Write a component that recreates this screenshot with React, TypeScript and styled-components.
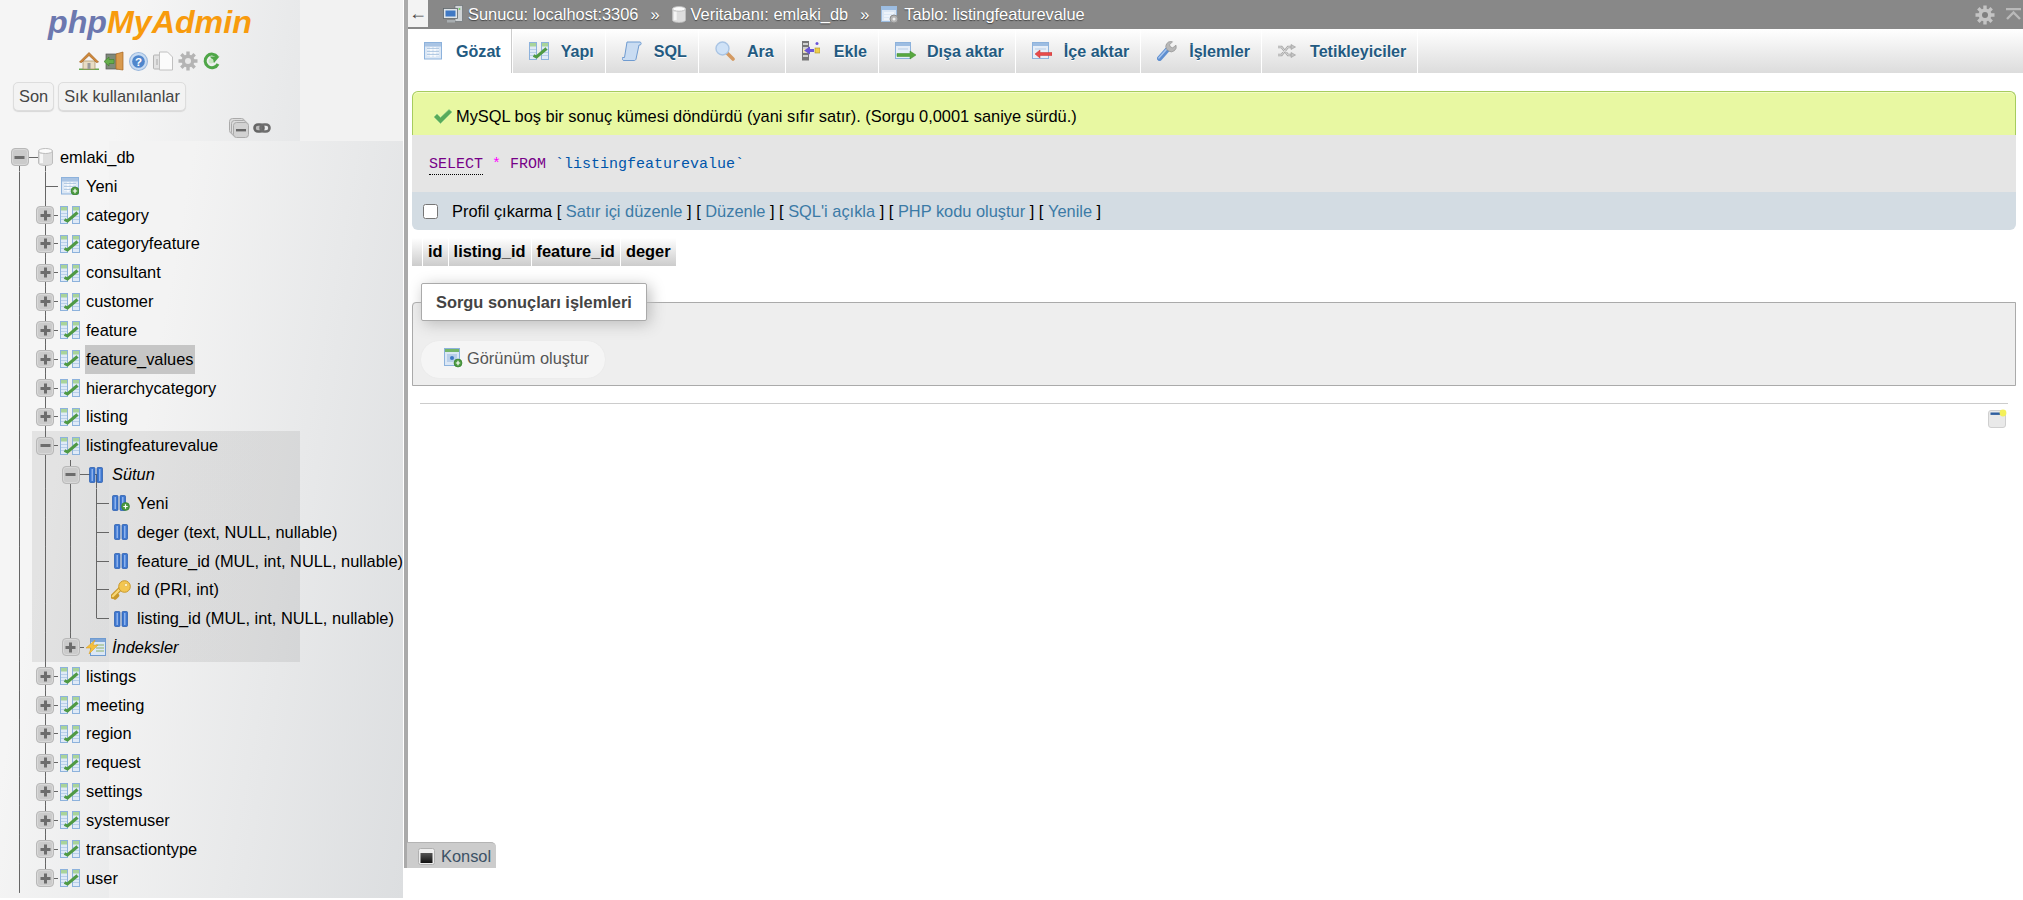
import React from 'react'
import styled, { createGlobalStyle } from 'styled-components'

const Global = createGlobalStyle`
	html, body {
		margin: 0;
		background: #fff;
	}
	body {
		font: 16.4px "Liberation Sans", Arial, sans-serif;
		color: #000;
		overflow: hidden;
	}
`

const Page = styled.div`
	display: flex;
	width: 2023px;
	height: 900px;
	overflow: hidden;
`

/* navigation panel */

const Sidebar = styled.aside`
	flex: none;
	width: 403px;
	height: 898px;
	margin-right: 1px;
	background: linear-gradient(100deg, #f5f5f5 30%, #dcdee0 100%) 0 0 / 300px 100% no-repeat, #f2f2f2;
`

const Handle = styled.div`
	flex: none;
	width: 4px;
	height: 868px;
	background: #aaa;
`

const Logo = styled.div`
	height: 47px;
	padding: 1px 0 0 48px;
	box-sizing: border-box;
	font-size: 32.2px;
	line-height: 42px;
	font-weight: bold;
	font-style: italic;
	color: #f89b0d;
	span {
		color: #6c78af;
	}
`

const QuickIcons = styled.div`
	display: flex;
	align-items: center;
	gap: 5px;
	height: 24px;
	padding: 2px 0 0 79px;
`

const RecentRow = styled.div`
	display: flex;
	gap: 4px;
	padding: 9px 0 0 13px;
`

const RecentButton = styled.div`
	height: 29px;
	padding: 0 5px;
	box-sizing: border-box;
	line-height: 27px;
	color: #444;
	background: #f3f3f3;
	border: 1px solid #ddd;
	border-radius: 5px;
	box-shadow: 0 1px 1px #d8d8d8;
`

const TreeControls = styled.div`
	display: flex;
	align-items: center;
	gap: 4px;
	height: 30px;
	box-sizing: border-box;
	padding: 3px 0 0 229px;
`

const Tree = styled.div`
	padding: 2px 0 0 7px;
	background: linear-gradient(100deg, #f3f3f3 20%, #dcdee0 100%) 109px 0 / 294px 100% no-repeat;
	height: 755px;
`

const OpenGroup = styled.div`
	margin-left: -7px;
	padding-left: 7px;
	background: linear-gradient(rgba(0, 0, 0, 0.075), rgba(0, 0, 0, 0.075)) 32px 0 / 268px 100% no-repeat;
`

const Row = styled.div`
	display: flex;
	align-items: center;
	height: 28.84px;
	white-space: nowrap;
`

type RailKind = 'none' | 'pass' | 'tee' | 'elbow' | 'start' | 'cap'

const LINE = 'linear-gradient(#666, #666)'
const railBackgrounds: Record<RailKind, string> = {
	none: 'none',
	pass: `${LINE} center / 1px 100% no-repeat`,
	tee: `${LINE} center / 1px 100% no-repeat, ${LINE} right center / 50% 1px no-repeat`,
	elbow: `${LINE} top center / 1px 50% no-repeat, ${LINE} right center / 50% 1px no-repeat`,
	start: `${LINE} bottom center / 1px 50% no-repeat, ${LINE} right center / 50% 1px no-repeat`,
	cap: `${LINE} bottom center / 1px 50% no-repeat, ${LINE} left center / 50% 1px no-repeat`,
}

const Rail = styled.span<{ $kind: RailKind }>`
	flex: none;
	display: flex;
	align-items: center;
	justify-content: center;
	width: 25.5px;
	height: 100%;
	background: ${(p) => railBackgrounds[p.$kind]};
`

const ExpanderBox = styled.span`
	display: flex;
	align-items: center;
	justify-content: center;
	width: 18px;
	height: 18px;
	box-sizing: border-box;
	background: #cbcbcb;
	border: 1px solid #b8b8b8;
	border-radius: 4px;
	box-shadow: inset 0 0 0 1px #d8d8d8;
`

const IconBox = styled.span`
	flex: none;
	display: flex;
	align-items: center;
	justify-content: center;
	width: 20px;
	margin: 0 6px 0 2px;
`

const Label = styled.span<{ $italic?: boolean; $hover?: boolean; $gap?: number }>`
	font-style: ${(p) => (p.$italic ? 'italic' : 'normal')};
	margin-left: ${(p) => p.$gap ?? 0}px;
	line-height: 29px;
	${(p) => p.$hover && 'background: #c6c6c6; margin-left: -1px; padding: 0 1px;'}
`

/* icons */

const Svg = styled.svg`
	flex: none;
	display: block;
`

const Expander = ({ open }: { open?: boolean }) => (
	<ExpanderBox>
		<Svg width="11" height="11" viewBox="0 0 11 11">
			<rect x="0.5" y="4" width="10" height="3" fill="#6c6c6c" />
			{!open && <rect x="4" y="0.5" width="3" height="10" fill="#6c6c6c" />}
		</Svg>
	</ExpanderBox>
)

const StructureIcon = ({ size = 20 }: { size?: number }) => (
	<Svg width={size} height={size} viewBox="0 0 20 20">
		<rect x="0.5" y="1.5" width="7" height="17" fill="#dfeaf7" stroke="#8db2dc" />
		<rect x="12.5" y="1.5" width="7" height="17" fill="#dfeaf7" stroke="#8db2dc" />
		<rect x="1" y="2" width="6" height="3.5" fill="#a9d49a" />
		<rect x="13" y="2" width="6" height="3.5" fill="#a9d49a" />
		<path d="M1 8.500h6M1 11.500h6M1 14.500h6M13 8.500h6M13 11.500h6M13 14.500h6" stroke="#b9cfe8" />
		<path d="M4.500 14.500l3 1.500L17.500 7.500" fill="none" stroke="#4f9a44" strokeWidth="3" />
	</Svg>
)

const DbIcon = ({ size = 15, h = 18 }: { size?: number; h?: number }) => (
	<Svg width={size} height={h} viewBox="0 0 15 18">
		<path d="M0.5 3v12c0 1.5 3 2.5 7 2.5s7-1 7-2.5V3z" fill="#dedede" stroke="#bdbdbd" />
		<ellipse cx="7.5" cy="3" rx="7" ry="2.5" fill="#fbfbfb" stroke="#bdbdbd" />
		<rect x="2" y="6" width="3" height="9" fill="#f6f6f6" />
	</Svg>
)

const PlusBadge = ({ x, y }: { x: number; y: number }) => (
	<g>
		<circle cx={x} cy={y} r="4" fill="#4c9a3f" stroke="#2f7a28" strokeWidth="0.6" />
		<path d={`M${x - 2.2} ${y}h4.4M${x} ${y - 2.2}v4.4`} stroke="#fff" strokeWidth="1.2" />
	</g>
)

const GridIcon = ({ size = 18, plus }: { size?: number; plus?: boolean }) => (
	<Svg width={size} height={size} viewBox="0 0 18 18">
		<rect x="0.5" y="0.5" width="17" height="16.5" fill="#dbe7f5" stroke="#8db2dc" />
		<rect x="1" y="1" width="16" height="3.5" fill="#a9c4e4" />
		<path d="M3 7h12M3 10h12M3 13h12M7 5v10M11 5v10" stroke="#fff" strokeWidth="1.2" />
		<path d="M3 6.5h12M3 9.5h12M3 12.5h12" stroke="#9ab7d9" strokeWidth="0.7" />
		{plus && <PlusBadge x={14} y={14} />}
	</Svg>
)

const ColumnIcon = ({ plus }: { plus?: boolean }) => (
	<Svg width={plus ? 18 : 14} height="16" viewBox={plus ? '0 0 18 16' : '0 0 14 16'}>
		<rect x="0.5" y="0.5" width="5.5" height="15" rx="1" fill="#3f78d0" stroke="#2459ad" strokeWidth="0.7" />
		<rect x="8" y="0.5" width="5.5" height="15" rx="1" fill="#3f78d0" stroke="#2459ad" strokeWidth="0.7" />
		<rect x="2.5" y="2" width="1.5" height="12" fill="#8db2ec" />
		<rect x="10" y="2" width="1.5" height="12" fill="#8db2ec" />
		{plus && <PlusBadge x={13.5} y={11.5} />}
	</Svg>
)

const KeyIcon = () => (
	<Svg width="20" height="20" viewBox="0 0 20 20">
		<path d="M1.500 16.500l8-8M4 17.500l2-2" stroke="#c9982a" strokeWidth="4.500" strokeLinecap="round" />
		<path d="M1.800 16.200l8-8" stroke="#f8d876" strokeWidth="2.200" strokeLinecap="round" />
		<circle cx="13.5" cy="6.5" r="5.8" fill="#f3c650" stroke="#c9982a" />
		<circle cx="15" cy="5" r="1.6" fill="#fff4c8" stroke="#d8a83a" strokeWidth="0.5" />
	</Svg>
)

const IndexIcon = () => (
	<Svg width="20" height="18" viewBox="0 0 20 18">
		<rect x="4.5" y="0.5" width="15" height="17" fill="#dbe7f5" stroke="#6f9bd0" />
		<rect x="5" y="1" width="14" height="3" fill="#7fa6d8" />
		<path d="M10 7h8M10 10h8M10 13h8" stroke="#8db26a" />
		<path d="M9 2L0 10h5l-2 6 9-9H7z" fill="#f5c03c" stroke="#d89a1e" strokeWidth="0.5" />
	</Svg>
)

const HomeIcon = () => (
	<Svg width="20" height="20" viewBox="0 0 20 20">
		<path d="M0 19h20v-1.5H0z" fill="#6aa84f" />
		<path d="M4 10v8h12v-8z" fill="#e8dcc4" stroke="#a88f66" strokeWidth="0.7" />
		<rect x="8.5" y="12" width="3" height="6" fill="#9a9a9a" />
		<path d="M0.5 11L10 1.5 19.5 11l-2 0.5L10 4.5 2.5 11.5z" fill="#d08a3a" stroke="#a35f1c" strokeWidth="0.7" />
	</Svg>
)

const ExitIcon = () => (
	<Svg width="20" height="20" viewBox="0 0 20 20">
		<rect x="2" y="3" width="12" height="15" fill="#7f8a7a" stroke="#555" strokeWidth="0.7" />
		<path d="M12 3l7-2v18l-7-1z" fill="#d99a4e" stroke="#a8651f" strokeWidth="0.7" />
		<path d="M0 10.5l5-4.5v2.5h5v4H5V15z" fill="#65ae4a" stroke="#3c7d2c" strokeWidth="0.6" />
	</Svg>
)

const HelpIcon = () => (
	<Svg width="19" height="19" viewBox="0 0 18 18">
		<circle cx="9" cy="9" r="8.5" fill="#c9dcf2" stroke="#9ab8dc" />
		<circle cx="9" cy="9" r="6" fill="#4f86cc" />
		<text x="9" y="13" fontSize="11" fontWeight="bold" fontFamily="Liberation Sans" textAnchor="middle" fill="#fff">?</text>
	</Svg>
)

const DocsIcon = () => (
	<Svg width="20" height="20" viewBox="0 0 20 20">
		<rect x="0.5" y="4" width="9" height="14" rx="1" fill="#e2e2e2" stroke="#b4b4b4" />
		<path d="M6.5 1h8l5 5v13h-13z" fill="#fbfbfb" stroke="#c0c0c0" />
		<path d="M4 8v6" stroke="#aaa" />
	</Svg>
)

const GearIcon = ({ size = 20, color = '#b4b4b4', hole = '#e8e8e8' }: { size?: number; color?: string; hole?: string }) => (
	<Svg width={size} height={size} viewBox="0 0 20 20">
		<g stroke={color} strokeWidth="3.4">
			<path d="M10 0.5v19M0.5 10h19M3.3 3.3l13.4 13.4M16.7 3.3L3.3 16.7" />
		</g>
		<circle cx="10" cy="10" r="6.5" fill={color} />
		<circle cx="10" cy="10" r="3" fill={hole} />
	</Svg>
)

const ReloadIcon = () => (
	<Svg width="17" height="20" viewBox="0 0 17 20">
		<path d="M14.5 6A6.8 6.8 0 1 0 15 13" fill="none" stroke="#4fa648" strokeWidth="3" />
		<path d="M7 5.5h9.5L11 12z" fill="#4fa648" />
		<circle cx="8" cy="10" r="2.5" fill="#c9e6c2" />
	</Svg>
)

const CollapseAllIcon = () => (
	<Svg width="20" height="20" viewBox="0 0 20 20">
		<rect x="0.5" y="0.5" width="15" height="15" rx="3" fill="#ddd" stroke="#aaa" />
		<rect x="2.5" y="2.5" width="15" height="15" rx="3" fill="#ddd" stroke="#aaa" />
		<rect x="4.5" y="4.5" width="15" height="15" rx="3" fill="#d2d2d2" stroke="#aaa" />
		<rect x="7" y="11" width="10" height="2.4" fill="#666" />
	</Svg>
)

const LinkIcon = () => (
	<Svg width="18" height="10" viewBox="0 0 18 10">
		<rect x="1.5" y="1.5" width="9" height="7" rx="3.500" fill="#bbb" stroke="#666" strokeWidth="2.6" />
		<rect x="7.5" y="1.5" width="9" height="7" rx="3.500" fill="none" stroke="#6e6e6e" strokeWidth="2.6" />
	</Svg>
)

const ServerIcon = () => (
	<Svg width="20" height="19" viewBox="0 0 20 19">
		<rect x="12" y="0.5" width="7.5" height="16" fill="#cfd3d6" stroke="#6d7377" strokeWidth="0.7" />
		<rect x="0.5" y="3.5" width="14" height="10" fill="#dfe4e8" stroke="#5f666b" strokeWidth="0.8" />
		<rect x="2.5" y="5.5" width="10" height="6" fill="#3f78c4" />
		<rect x="4" y="15" width="8" height="2.5" fill="#a8adb0" />
		<circle cx="16.5" cy="4" r="0.9" fill="#6fd15b" />
	</Svg>
)

const TableGearIcon = () => (
	<Svg width="18" height="18" viewBox="0 0 18 18">
		<rect x="0.5" y="0.5" width="15" height="15" fill="#dbe7f5" stroke="#9bbce0" />
		<rect x="1" y="1" width="14" height="3" fill="#9dbde2" />
		<path d="M3 7h10M3 10h10M3 13h10" stroke="#fff" />
		<circle cx="13" cy="13" r="4" fill="#b4b4b4" stroke="#8c8c8c" />
		<circle cx="13" cy="13" r="1.5" fill="#eee" />
	</Svg>
)

const ScrollIcon = () => (
	<Svg width="20" height="20" viewBox="0 0 20 20">
		<path d="M5 1h13c1.5 0 1.5 3 0 3h-1l-3 14c-0.3 1.2-1 1.5-2 1.5H2c-1.5 0-2-1-1.5-3h2z" fill="#c9dcf2" stroke="#6f9bd0" />
	</Svg>
)

const SearchIcon = () => (
	<Svg width="20" height="20" viewBox="0 0 20 20">
		<path d="M11 11l7 7" stroke="#d49a62" strokeWidth="3.6" strokeLinecap="round" />
		<circle cx="7.5" cy="7.5" r="6.5" fill="#cfe2f7" stroke="#a9c4e4" strokeWidth="1.4" />
	</Svg>
)

const InsertIcon = () => (
	<Svg width="18" height="20" viewBox="0 0 18 20">
		<rect x="0" y="0" width="7" height="19.5" fill="#777" />
		<path d="M1 3h5M1 7h5M1 11h5M1 15h5" stroke="#eee" strokeWidth="1.5" />
		<rect x="1" y="8" width="5" height="3.5" fill="#f2e8b0" />
		<path d="M2 9.5l6-4v2.5h4v3H8v2.5z" fill="#6a55d8" />
		<rect x="13" y="7" width="5" height="5" fill="#f0cf4a" stroke="#a88f2a" strokeWidth="0.6" />
		<circle cx="15" cy="2.5" r="1.5" fill="#6a55d8" />
	</Svg>
)

const ExportIcon = () => (
	<Svg width="21" height="20" viewBox="0 0 21 20">
		<rect x="0.5" y="1.5" width="15" height="16" fill="#e6eef8" stroke="#8db2dc" />
		<rect x="1" y="2" width="14" height="3" fill="#9dbde2" />
		<path d="M3 8h10" stroke="#b7cde6" />
		<path d="M2 12.5h13v-2.5l6 4-6 4v-2.5H2z" fill="#58a83f" stroke="#3f8a2c" strokeWidth="0.5" />
	</Svg>
)

const ImportIcon = () => (
	<Svg width="20" height="20" viewBox="0 0 20 20">
		<rect x="0.5" y="1.5" width="16" height="16" fill="#e6eef8" stroke="#8db2dc" />
		<rect x="1" y="2" width="15" height="3" fill="#9dbde2" />
		<path d="M3 8h11" stroke="#b7cde6" />
		<path d="M20 11.5H8V9l-5 4 5 4v-2.5h12z" fill="#e84a4a" stroke="#c23232" strokeWidth="0.5" />
	</Svg>
)

const WrenchIcon = () => (
	<Svg width="20" height="20" viewBox="0 0 20 20">
		<path d="M2.5 17.5l8-9" stroke="#5f8fd0" strokeWidth="5" strokeLinecap="round" />
		<path d="M1.8 17l8-9" stroke="#a8c6ee" strokeWidth="1.5" strokeLinecap="round" />
		<path d="M9.5 8a5 5 0 0 1 5-7.5l1 .3-3 3 1 2.2 2.2.8 3.3-2.6A5 5 0 0 1 11.5 10z" fill="#b8b8b8" stroke="#888" strokeWidth="0.6" />
	</Svg>
)

const TriggerIcon = () => (
	<Svg width="18" height="14" viewBox="0 0 18 14">
		<path d="M0 3h3.500l6.500 8h3M0 11h3.500l6.500-8h3" fill="none" stroke="#a8a8a8" strokeWidth="2.400" />
		<path d="M0 3h3.500l6.500 8h3M0 11h3.500l6.500-8h3" fill="none" stroke="#e4e4e4" strokeWidth="0.800" />
		<path d="M13 0.500l4.500 2.500L13 5.500zM13 8.500l4.500 2.500L13 13.500z" fill="#c4c4c4" stroke="#8c8c8c" strokeWidth="0.5" />
	</Svg>
)

const CheckIcon = () => (
	<Svg width="20" height="16" viewBox="0 0 20 16">
		<path d="M1 9l3-3 3.5 3.5L16 1.5l3 2.5L7.5 15.5z" fill="#58ab5a" stroke="#8ccf8c" strokeWidth="0.6" />
	</Svg>
)

const ViewIcon = () => (
	<Svg width="20" height="20" viewBox="0 0 20 20">
		<rect x="1.5" y="0.5" width="15" height="17" fill="#dbe7f5" stroke="#8db2dc" />
		<rect x="2" y="1" width="14" height="3" fill="#74b56a" />
		<rect x="4" y="6" width="10" height="8" fill="#b9cfe9" />
		<circle cx="9" cy="10" r="2" fill="#3f78c4" />
		<PlusBadge x={15} y={15} />
	</Svg>
)

const TerminalIcon = () => (
	<Svg width="17" height="17" viewBox="0 0 17 17">
		<defs>
			<linearGradient id="konsolFill" x1="0" y1="0" x2="0" y2="1">
				<stop offset="0" stopColor="#555" />
				<stop offset="1" stopColor="#111" />
			</linearGradient>
		</defs>
		<rect x="0.5" y="0.5" width="16" height="16" rx="2" fill="#eee" stroke="#b0b0b0" />
		<rect x="2.5" y="5" width="12" height="10" fill="url(#konsolFill)" />
	</Svg>
)

const NotesIcon = () => (
	<Svg width="19" height="19" viewBox="0 0 19 19">
		<rect x="0.5" y="1.5" width="17" height="17" rx="2.5" fill="#e9e9e9" stroke="#cfcfcf" />
		<rect x="2.5" y="3.5" width="12" height="2.4" fill="#2f5f9f" />
		<circle cx="15" cy="4" r="3.4" fill="#f4f05a" />
	</Svg>
)

const CollapseArrowIcon = () => (
	<Svg width="15" height="13" viewBox="0 0 15 13">
		<path d="M0 1h15M1 11l6.500-6.500L14 11" fill="none" stroke="#b9b9b9" strokeWidth="2.4" />
	</Svg>
)

/* main column */

const Main = styled.main`
	flex: none;
	display: flex;
	flex-direction: column;
	width: 1615px;
	height: 868px;
`

const TopBar = styled.header`
	flex: none;
	display: flex;
	align-items: center;
	height: 29px;
	background: #888;
	color: #fff;
	text-shadow: 0 1px 1px #444;
`

const BackButton = styled.div`
	align-self: flex-start;
	width: 20px;
	height: 27px;
	margin-right: 15px;
	background: #f3f3f3;
	color: #444;
	text-align: center;
	font-size: 18px;
	line-height: 27px;
	text-shadow: none;
`

const Crumb = styled.span`
	display: flex;
	align-items: center;
	gap: 5px;
`

const CrumbSep = styled.span`
	margin: 0 12px;
`

const BarActions = styled.div`
	display: flex;
	align-items: center;
	gap: 11px;
	margin-left: auto;
	padding-right: 2px;
`

const TabBar = styled.nav`
	flex: none;
	display: flex;
	height: 44px;
	background: linear-gradient(#fff, #dcdcdc);
`

const Tab = styled.a<{ $active?: boolean }>`
	display: flex;
	align-items: center;
	padding: 0 11px 0 16px;
	border-right: 1px solid #fff;
	background: ${(p) => (p.$active ? '#fff' : 'none')};
	box-shadow: ${(p) => (p.$active ? 'inset -1px 0 0 #ccc' : 'none')};
	font-size: 16.1px;
	font-weight: bold;
	color: #235a81;
	text-shadow: 0 1px 0 #fff;
`

const TabIcon = styled.span`
	flex: none;
	display: flex;
	align-items: center;
	width: 32px;
`

const Content = styled.div`
	flex: 1;
	display: flex;
	flex-direction: column;
	padding: 18px 7px 0 4px;
`

const Message = styled.div`
	display: flex;
	align-items: center;
	gap: 3px;
	height: 44px;
	padding: 5px 0 0 20px;
	box-sizing: border-box;
	background: #e8f8a2;
	border: 1px solid #a6cc5e;
	border-bottom: 0;
	border-radius: 6px 6px 0 0;
	box-shadow: inset 0 1px 0 #f4fcc8;
`

const SqlBox = styled.div`
	height: 57px;
	padding-left: 17px;
	background: #e5e5e5;
	font: 15px/60px "Liberation Mono", "Courier New", monospace;
	color: #555;
`

const Keyword = styled.span<{ $dotted?: boolean }>`
	color: #770088;
	${(p) => p.$dotted && 'border-bottom: 1px dotted #000; padding-bottom: 1px;'}
`

const Star = styled.span`
	color: #f0f;
`

const Ident = styled.span`
	color: #0055aa;
`

const SqlTools = styled.div`
	display: flex;
	align-items: center;
	height: 38px;
	padding-left: 11px;
	background: #d3dce3;
	border-radius: 0 0 6px 6px;
	white-space: pre;
`

const Check = styled.input`
	width: 15px;
	height: 15px;
	margin: 0 14px 0 0;
`

const ToolLink = styled.a`
	color: #3b7aa6;
`

const ResultHead = styled.div`
	display: flex;
	gap: 1px;
	height: 28px;
	margin-top: 8px;
`

const HeadCell = styled.div<{ $blank?: boolean }>`
	width: ${(p) => (p.$blank ? '10px' : 'auto')};
	padding: 0 ${(p) => (p.$blank ? '0' : '5px')};
	background: linear-gradient(#fff, #ccc);
	font-weight: bold;
	line-height: 27px;
`

const OpsField = styled.fieldset`
	margin: 17px 0 0;
	padding: 20px 8px 7px;
	background: #eee;
	border: 1px solid #aaa;
	border-radius: 4px 0 0 0;
`

const OpsLegend = styled.legend`
	height: 38px;
	box-sizing: border-box;
	padding: 0 14px;
	margin: 0;
	background: #fff;
	border: 1px solid #aaa;
	border-radius: 2px;
	box-shadow: 3px 3px 15px #bbb;
	font-weight: bold;
	line-height: 36px;
	color: #444;
`

const OpsButton = styled.a`
	display: inline-flex;
	align-items: center;
	gap: 4px;
	height: 37px;
	padding: 0 16px 3px 22px;
	box-sizing: border-box;
	background: #f5f5f5;
	border-radius: 18px;
	box-shadow: 0 0 1px #ddd;
	color: #555;
`

const Rule = styled.hr`
	width: 1588px;
	height: 0;
	margin: 17px 0 0 8px;
	border: 0;
	border-top: 1px solid #ccc;
`

const NotesRow = styled.div`
	display: flex;
	justify-content: flex-end;
	padding: 5px 1px 0 0;
	margin-right: 8px;
`

const Konsol = styled.div`
	align-self: flex-start;
	display: flex;
	align-items: center;
	gap: 6px;
	height: 26px;
	margin: auto 0 0 -5px;
	padding: 1px 5px 0 11px;
	background: #ccc;
	border-top: 1px solid #b4b4b4;
	border-radius: 0 5px 0 0;
	box-sizing: border-box;
	color: #3c5266;
`

/* tree data */

interface Node {
	label: string
	rails: RailKind[]
	expander?: 'open' | 'closed'
	icon: React.ReactNode
	italic?: boolean
	hover?: boolean
	slot?: RailKind
}

const table = (label: string, open = false, hover = false, last = false): Node => ({
	label,
	rails: ['pass', last ? 'elbow' : 'tee'],
	expander: open ? 'open' : 'closed',
	icon: <StructureIcon />,
	hover,
})

const column = (label: string, icon: React.ReactNode, last = false): Node => ({
	label,
	rails: ['pass', 'pass', 'pass', last ? 'elbow' : 'tee'],
	icon,
})

const before: Node[] = [
	{ label: 'Yeni', rails: ['pass', 'tee'], icon: <GridIcon plus /> },
	...['category', 'categoryfeature', 'consultant', 'customer', 'feature'].map((t) => table(t)),
	table('feature_values', false, true),
	table('hierarchycategory'),
	table('listing'),
]

const group: Node[] = [
	table('listingfeaturevalue', true),
	{
		label: 'Sütun',
		rails: ['pass', 'pass', 'tee'],
		expander: 'open',
		icon: <ColumnIcon />,
		italic: true,
		slot: 'cap',
	},
	column('Yeni', <ColumnIcon plus />),
	column('deger (text, NULL, nullable)', <ColumnIcon />),
	column('feature_id (MUL, int, NULL, nullable)', <ColumnIcon />),
	column('id (PRI, int)', <KeyIcon />),
	column('listing_id (MUL, int, NULL, nullable)', <ColumnIcon />, true),
	{
		label: 'İndeksler',
		rails: ['pass', 'pass', 'elbow'],
		expander: 'closed',
		icon: <IndexIcon />,
		italic: true,
		slot: 'none',
	},
]

const after: Node[] = [
	...['listings', 'meeting', 'region', 'request', 'settings', 'systemuser', 'transactiontype'].map((t) => table(t)),
	table('user', false, false, true),
]

const TreeRow = ({ node }: { node: Node }) => (
	<Row>
		{node.rails.map((kind, i) => (
			<Rail key={i} $kind={kind}>
				{node.expander && i === node.rails.length - 1 && <Expander open={node.expander === 'open'} />}
			</Rail>
		))}
		{node.slot ? (
			<Rail $kind={node.slot}>{node.icon}</Rail>
		) : (
			<IconBox>{node.icon}</IconBox>
		)}
		<Label $italic={node.italic} $hover={node.hover} $gap={node.slot ? 3 : 0}>
			{node.label}
		</Label>
	</Row>
)

const tabs: { label: string; icon: React.ReactNode; active?: boolean }[] = [
	{ label: 'Gözat', icon: <GridIcon />, active: true },
	{ label: 'Yapı', icon: <StructureIcon /> },
	{ label: 'SQL', icon: <ScrollIcon /> },
	{ label: 'Ara', icon: <SearchIcon /> },
	{ label: 'Ekle', icon: <InsertIcon /> },
	{ label: 'Dışa aktar', icon: <ExportIcon /> },
	{ label: 'İçe aktar', icon: <ImportIcon /> },
	{ label: 'İşlemler', icon: <WrenchIcon /> },
	{ label: 'Tetikleyiciler', icon: <TriggerIcon /> },
]

const App: React.FC = () => (
	<>
		<Global />
		<Page>
			<Sidebar>
				<Logo>
					<span>php</span>MyAdmin
				</Logo>
				<QuickIcons>
					<HomeIcon />
					<ExitIcon />
					<HelpIcon />
					<DocsIcon />
					<GearIcon />
					<ReloadIcon />
				</QuickIcons>
				<RecentRow>
					<RecentButton>Son</RecentButton>
					<RecentButton>Sık kullanılanlar</RecentButton>
				</RecentRow>
				<TreeControls>
					<CollapseAllIcon />
					<LinkIcon />
				</TreeControls>
				<Tree>
					<Row>
						<Rail $kind="start">
							<Expander open />
						</Rail>
						<Rail $kind="cap">
							<DbIcon />
						</Rail>
						<Label $gap={2}>emlaki_db</Label>
					</Row>
					{before.map((n) => (
						<TreeRow key={n.label} node={n} />
					))}
					<OpenGroup>
						{group.map((n) => (
							<TreeRow key={n.label} node={n} />
						))}
					</OpenGroup>
					{after.map((n) => (
						<TreeRow key={n.label} node={n} />
					))}
				</Tree>
			</Sidebar>
			<Handle />
			<Main>
				<TopBar>
					<BackButton>←</BackButton>
					<Crumb>
						<ServerIcon />
						Sunucu: localhost:3306
					</Crumb>
					<CrumbSep>»</CrumbSep>
					<Crumb>
						<DbIcon size={14} h={17} />
						Veritabanı: emlaki_db
					</Crumb>
					<CrumbSep>»</CrumbSep>
					<Crumb>
						<TableGearIcon />
						Tablo: listingfeaturevalue
					</Crumb>
					<BarActions>
						<GearIcon color="#c4c4c4" hole="#808080" />
						<CollapseArrowIcon />
					</BarActions>
				</TopBar>
				<TabBar>
					{tabs.map((t) => (
						<Tab key={t.label} $active={t.active}>
							<TabIcon>{t.icon}</TabIcon>
							{t.label}
						</Tab>
					))}
				</TabBar>
				<Content>
					<Message>
						<CheckIcon />
						MySQL boş bir sonuç kümesi döndürdü (yani sıfır satır). (Sorgu 0,0001 saniye sürdü.)
					</Message>
					<SqlBox>
						<Keyword $dotted>SELECT</Keyword> <Star>*</Star> <Keyword>FROM</Keyword>{' '}
						<Ident>`listingfeaturevalue`</Ident>
					</SqlBox>
					<SqlTools>
						<Check type="checkbox" />
						Profil çıkarma [ <ToolLink>Satır içi düzenle</ToolLink> ] [ <ToolLink>Düzenle</ToolLink> ] [{' '}
						<ToolLink>SQL'i açıkla</ToolLink> ] [ <ToolLink>PHP kodu oluştur</ToolLink> ] [{' '}
						<ToolLink>Yenile</ToolLink> ]
					</SqlTools>
					<ResultHead>
						<HeadCell $blank />
						<HeadCell>id</HeadCell>
						<HeadCell>listing_id</HeadCell>
						<HeadCell>feature_id</HeadCell>
						<HeadCell>deger</HeadCell>
					</ResultHead>
					<OpsField>
						<OpsLegend>Sorgu sonuçları işlemleri</OpsLegend>
						<OpsButton>
							<ViewIcon />
							Görünüm oluştur
						</OpsButton>
					</OpsField>
					<Rule />
					<NotesRow>
						<NotesIcon />
					</NotesRow>
					<Konsol>
						<TerminalIcon />
						Konsol
					</Konsol>
				</Content>
			</Main>
		</Page>
	</>
)

export default App
